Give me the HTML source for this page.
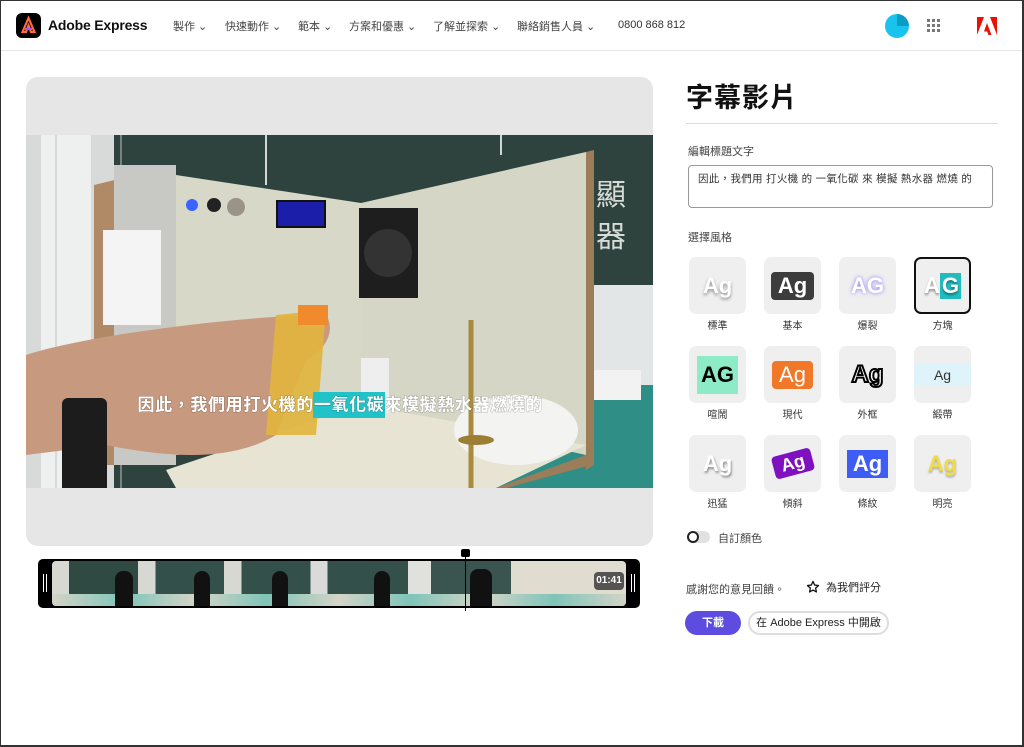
<!DOCTYPE html>
<html><head><meta charset="utf-8">
<style>
*{box-sizing:border-box;margin:0;padding:0}
html,body{width:1024px;height:747px;overflow:hidden;background:#fff}
body{font-family:"Liberation Sans","Noto Sans CJK TC",sans-serif;color:#2c2c2c;position:relative}
.frame{position:absolute;left:0;top:0;width:1024px;height:747px;border:1px solid #333;border-width:1px 2px 2px 1px;pointer-events:none;z-index:10}
.hdr{position:absolute;left:0;top:0;width:1024px;height:51px;border-bottom:1px solid #e6e6e6}
.logo{position:absolute;left:16px;top:13px;width:25px;height:25px;background:#000;border-radius:6px}
.brand{position:absolute;left:48px;top:17px;font-size:14px;font-weight:bold;color:#111;letter-spacing:-0.2px}
.nav{position:absolute;top:18px;font-size:11px;color:#444}
.abs{position:absolute}
.lbl{position:absolute;font-size:11px;color:#444}
.tile{position:absolute;width:57px;height:57px;background:#efefef;border-radius:7px;display:flex;align-items:center;justify-content:center;font-weight:bold;font-size:22px}
.tl{position:absolute;width:57px;text-align:center;font-size:10px;color:#333}
</style></head><body>
<div class="frame"></div>
<div class="hdr">
 <div class="logo"><svg width="25" height="25" viewBox="0 0 25 25"><path d="M12.5 5 L6.5 19 H10 L12.5 12.5 L15 19 H18.5 Z" fill="none" stroke="#ff6b3a" stroke-width="2.2"/><path d="M9 16 H16" stroke="#b44cff" stroke-width="2"/></svg></div>
 <div class="brand">Adobe Express</div>
 <div class="nav" style="left:173px">製作 ⌄</div>
 <div class="nav" style="left:225px">快速動作 ⌄</div>
 <div class="nav" style="left:298px">範本 ⌄</div>
 <div class="nav" style="left:349px">方案和優惠 ⌄</div>
 <div class="nav" style="left:433px">了解並探索 ⌄</div>
 <div class="nav" style="left:517px">聯絡銷售人員 ⌄</div>
 <div class="nav" style="left:618px;top:19px;color:#333">0800 868 812</div>
 <div class="abs" style="left:885px;top:14px;width:24px;height:24px;border-radius:50%;background:#18c3ee;overflow:hidden"><div style="position:absolute;left:12px;top:0;width:12px;height:12px;background:#0b9cc4;border-radius:0 12px 0 0"></div></div>
 <svg class="abs" style="left:927px;top:19px" width="14" height="14"><g fill="#777"><rect x="0" y="0" width="3" height="3"/><rect x="5" y="0" width="3" height="3"/><rect x="10" y="0" width="3" height="3"/><rect x="0" y="5" width="3" height="3"/><rect x="5" y="5" width="3" height="3"/><rect x="10" y="5" width="3" height="3"/><rect x="0" y="10" width="3" height="3"/><rect x="5" y="10" width="3" height="3"/><rect x="10" y="10" width="3" height="3"/></g></svg>
 <svg class="abs" style="left:977px;top:17px" width="20" height="18" viewBox="0 0 20 18"><path d="M0 0H7L0 18Z M13 0H20V18Z M10 6L14.5 18H11.5L10.2 14.5H7Z" fill="#eb1000"/></svg>
</div>

<div class="abs" style="left:26px;top:77px;width:627px;height:469px;background:#e6e6e6;border-radius:12px"></div>
<svg class="abs" style="left:26px;top:135px" width="627" height="353" viewBox="0 0 627 353">
 <rect width="627" height="353" fill="#2e433e"/>
 <rect x="0" y="0" width="88" height="353" fill="#d8dada"/>
 <rect x="15" y="0" width="50" height="353" fill="#eef0f0"/>
 <rect x="565" y="150" width="62" height="100" fill="#e2e6e6"/>
 <path d="M30 0V353M95 0V353" stroke="#bfc3c3"/>
 <path d="M240 0V50M475 0V20" stroke="#cfd6d3" stroke-width="2"/>
 <text x="570" y="70" fill="#d8dcd8" font-size="30" font-family="Noto Sans CJK TC">顯</text>
 <text x="570" y="112" fill="#d8dcd8" font-size="30" font-family="Noto Sans CJK TC">器</text>
 <path d="M380 353L440 250H627V353Z" fill="#2f8e86"/>
 <rect x="565" y="235" width="50" height="30" fill="#f2f2f2"/>
 <path d="M68 50L150 30V330L68 330Z" fill="#b08a66"/>
 <path d="M88 30L150 30V330H88Z" fill="#c8c8c4"/>
 <path d="M150 40L335 68V300L150 320Z" fill="#d7d8c7"/>
 <path d="M335 68L560 17V320L335 270Z" fill="#d5d6c5"/>
 <path d="M560 17L568 15V330L560 335Z" fill="#9c7d5a"/>
 <path d="M140 335L335 270L560 310L470 353H150Z" fill="#e8e4d4"/>
 <path d="M150 353L470 353L560 320L565 330L480 353Z" fill="#9c7d5a"/>
 <rect x="77" y="95" width="58" height="95" fill="#f4f4f4"/>
 <circle cx="166" cy="70" r="6" fill="#3b64ff"/><circle cx="188" cy="70" r="7" fill="#222"/><circle cx="210" cy="72" r="9" fill="#9a9488"/>
 <rect x="251" y="66" width="48" height="26" fill="#1a1ea8" stroke="#111" stroke-width="2"/>
 <rect x="333" y="73" width="59" height="90" fill="#1e1e1e"/><circle cx="362" cy="118" r="24" fill="#333"/>
 <ellipse cx="490" cy="295" rx="62" ry="35" fill="#f3f3f1"/>
 <path d="M445 185V360" stroke="#a88b3e" stroke-width="5"/><ellipse cx="450" cy="305" rx="18" ry="5" fill="#9c7f35"/>
 <rect x="335" y="223" width="28" height="55" fill="#eee"/>
 <rect x="230" y="215" width="30" height="40" fill="#5fc7d8"/>
 <path d="M0 220C60 200 220 180 300 180C310 195 300 215 280 225L250 300C200 330 130 320 80 310L0 320Z" fill="#c79a80"/>
 <path d="M250 180L300 175L290 300L240 300Z" fill="#e1b53c" opacity="0.9"/>
 <rect x="272" y="170" width="30" height="20" fill="#f08a2c"/>
 <rect x="36" y="263" width="45" height="110" rx="6" fill="#1c1c1c"/>
 <rect x="287" y="257" width="72" height="26" fill="#21c3c9"/>
 <text x="314" y="270" text-anchor="middle" dominant-baseline="central" fill="#fff" font-size="17" font-weight="bold" font-family="Liberation Sans,Noto Sans CJK TC,sans-serif" style="paint-order:stroke" stroke="rgba(0,0,0,0.25)" stroke-width="1" textLength="405">因此，我們用打火機的一氧化碳來模擬熱水器燃燒的</text>
</svg>

<div class="abs" style="left:38px;top:559px;width:602px;height:49px;background:#000;border-radius:5px"></div>
<div class="abs" style="left:52px;top:561px;width:574px;height:45px;border-radius:4px;overflow:hidden;background:linear-gradient(90deg,#d8d8d2 0 3%,#2f4a42 3% 15%,#d8d8d2 15% 18%,#34504a 18% 30%,#d8d8d2 30% 33%,#33504a 33% 45%,#dadada 45% 48%,#33504a 48% 62%,#e0e0dc 62% 66%,#3a5450 66% 80%,#e0ddd0 80% 100%)">
 <div style="position:absolute;left:0;bottom:0;width:100%;height:12px;background:linear-gradient(90deg,#d4d4c8,#7fc4b8,#d4d4c8,#7fc4b8,#d4d4c8,#7fc4b8,#d4d4c8,#7fc4b8,#d4d4c8)"></div>
 <div style="position:absolute;left:63px;top:10px;width:18px;height:35px;background:#111;border-radius:8px 8px 0 0"></div>
 <div style="position:absolute;left:142px;top:10px;width:16px;height:35px;background:#111;border-radius:8px 8px 0 0"></div>
 <div style="position:absolute;left:220px;top:10px;width:16px;height:35px;background:#111;border-radius:8px 8px 0 0"></div>
 <div style="position:absolute;left:322px;top:10px;width:16px;height:35px;background:#111;border-radius:8px 8px 0 0"></div>
 <div style="position:absolute;left:418px;top:8px;width:22px;height:37px;background:#111;border-radius:8px 8px 0 0"></div>
 <div style="position:absolute;left:542px;top:11px;width:30px;height:18px;background:rgba(60,60,60,.85);border-radius:4px;color:#fff;font-size:10px;font-weight:bold;text-align:center;line-height:18px">01:41</div>
</div>
<div class="abs" style="left:43px;top:574px;height:18px;border-left:1px solid #fff;border-right:1px solid #fff;width:4px"></div>
<div class="abs" style="left:631px;top:574px;height:18px;border-left:1px solid #fff;border-right:1px solid #fff;width:4px"></div>
<div class="abs" style="left:465px;top:553px;width:1px;height:58px;background:#000"></div>
<div class="abs" style="left:461px;top:549px;width:9px;height:8px;background:#000;border-radius:2px"></div>

<div class="abs" style="left:686px;top:76px;font-size:27px;font-weight:bold;color:#111;letter-spacing:1px">字幕影片</div>
<div class="abs" style="left:686px;top:123px;width:312px;height:1px;background:#ddd"></div>
<div class="lbl" style="left:688px;top:143px">編輯標題文字</div>
<div class="abs" style="left:688px;top:165px;width:305px;height:43px;border:1px solid #999;border-radius:4px;padding:5px 9px;font-size:10.5px;color:#333;letter-spacing:0.3px;white-space:nowrap;overflow:hidden">因此，我們用 打火機 的 一氧化碳 來 模擬 熱水器 燃燒 的</div>
<div class="lbl" style="left:688px;top:229px">選擇風格</div>

<div class="tile" style="left:689px;top:257px;color:#fff;text-shadow:0 2px 3px rgba(0,0,0,.4)">Ag</div>
<div class="tile" style="left:764px;top:257px"><span style="background:#3c3c3c;color:#fff;padding:1px 7px;border-radius:4px">Ag</span></div>
<div class="tile" style="left:839px;top:257px;color:#fff;text-shadow:0 0 4px #8a70ff">AG</div>
<div class="tile" style="left:914px;top:257px;border:2px solid #111;color:#fff;text-shadow:0 2px 2px rgba(0,0,0,.4)">A<span style="background:#1fbdbf;padding:0 2px">G</span></div>
<div class="tile" style="left:689px;top:346px"><span style="background:#8eebc8;color:#000;padding:6px 4px;font-weight:900">AG</span></div>
<div class="tile" style="left:764px;top:346px"><span style="background:#f07828;color:#fff;padding:1px 7px;border-radius:4px;font-weight:normal">Ag</span></div>
<div class="tile" style="left:839px;top:346px;color:#fff;-webkit-text-stroke:2px #000;font-size:24px">Ag</div>
<div class="tile" style="left:914px;top:346px"><span style="background:#dff4fa;color:#333;font-weight:normal;font-size:14px;padding:3px 20px">Ag</span></div>
<div class="tile" style="left:689px;top:435px;color:#fff;text-shadow:1px 2px 2px rgba(0,0,0,.4)">Ag</div>
<div class="tile" style="left:764px;top:435px"><span style="background:#7f10c0;color:#fff;padding:1px 8px;border-radius:4px;transform:rotate(-15deg);display:inline-block;font-size:18px">Ag</span></div>
<div class="tile" style="left:839px;top:435px"><span style="background:#3d5df5;color:#fff;padding:1px 6px">Ag</span></div>
<div class="tile" style="left:914px;top:435px;color:#f1db4a;text-shadow:0 2px 2px rgba(0,0,0,.3)">Ag</div>

<div class="tl" style="left:689px;top:317px">標準</div><div class="tl" style="left:764px;top:317px">基本</div><div class="tl" style="left:839px;top:317px">爆裂</div><div class="tl" style="left:914px;top:317px">方塊</div>
<div class="tl" style="left:689px;top:406px">喧鬧</div><div class="tl" style="left:764px;top:406px">現代</div><div class="tl" style="left:839px;top:406px">外框</div><div class="tl" style="left:914px;top:406px">緞帶</div>
<div class="tl" style="left:689px;top:495px">迅猛</div><div class="tl" style="left:764px;top:495px">傾斜</div><div class="tl" style="left:839px;top:495px">條紋</div><div class="tl" style="left:914px;top:495px">明亮</div>

<div class="abs" style="left:687px;top:531px;width:23px;height:12px;border-radius:6px;background:#e1e1e1"></div>
<div class="abs" style="left:687px;top:531px;width:12px;height:12px;border-radius:50%;border:2px solid #222;background:#fff"></div>
<div class="lbl" style="left:718px;top:530px">自訂顏色</div>

<div class="lbl" style="left:686px;top:581px">感謝您的意見回饋。</div>
<svg class="abs" style="left:806px;top:580px" width="14" height="14" viewBox="0 0 24 24"><path d="M12 2.5l2.9 6.2 6.6.7-5 4.5 1.4 6.6L12 17.2 6.1 20.5l1.4-6.6-5-4.5 6.6-.7z" fill="none" stroke="#111" stroke-width="2.2" stroke-linejoin="round"/></svg>
<div class="lbl" style="left:826px;top:579px;color:#222">為我們評分</div>

<div class="abs" style="left:685px;top:611px;width:56px;height:24px;border-radius:12px;background:#5c4ce0;color:#fff;font-size:11px;font-weight:bold;text-align:center;line-height:24px">下載</div>
<div class="abs" style="left:748px;top:611px;width:141px;height:24px;border-radius:12px;border:2px solid #ddd;color:#222;font-size:11px;text-align:center;line-height:20px">在 Adobe Express 中開啟</div>
</body></html>
